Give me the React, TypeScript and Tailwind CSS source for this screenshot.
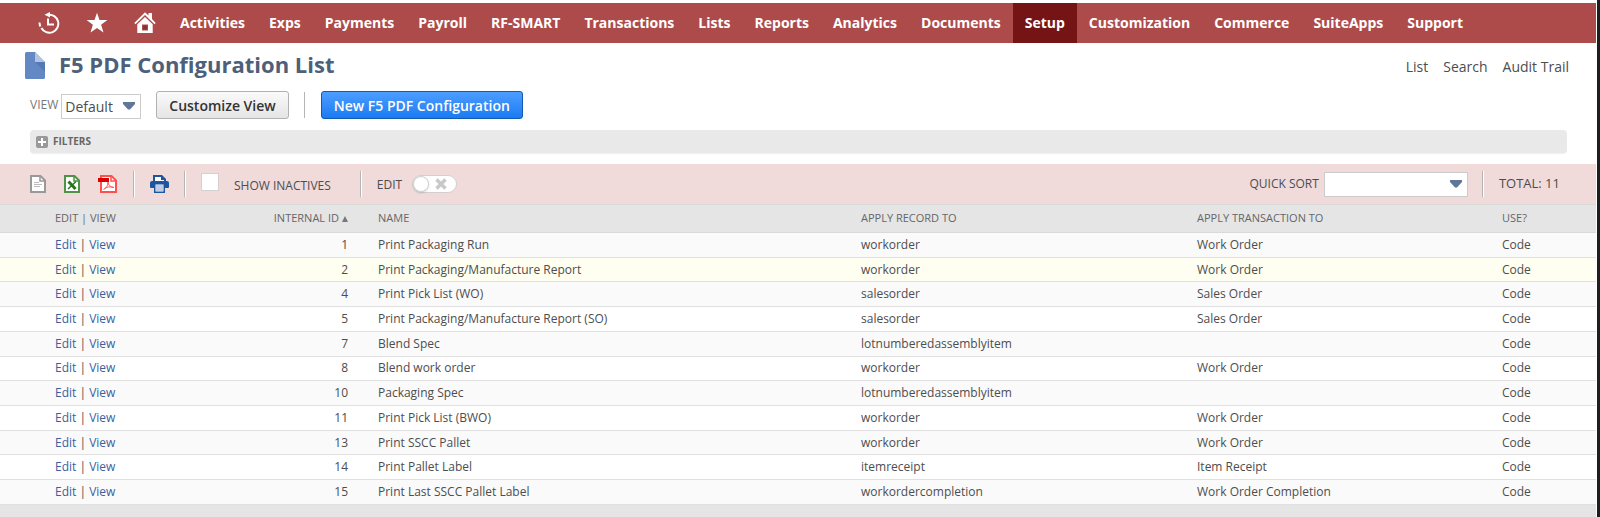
import clsx from "clsx";

const menu = [
  "Activities",
  "Exps",
  "Payments",
  "Payroll",
  "RF-SMART",
  "Transactions",
  "Lists",
  "Reports",
  "Analytics",
  "Documents",
  "Setup",
  "Customization",
  "Commerce",
  "SuiteApps",
  "Support",
];

const rows = [
  { id: 1, name: "Print Packaging Run", record: "workorder", transaction: "Work Order" },
  { id: 2, name: "Print Packaging/Manufacture Report", record: "workorder", transaction: "Work Order" },
  { id: 4, name: "Print Pick List (WO)", record: "salesorder", transaction: "Sales Order" },
  { id: 5, name: "Print Packaging/Manufacture Report (SO)", record: "salesorder", transaction: "Sales Order" },
  { id: 7, name: "Blend Spec", record: "lotnumberedassemblyitem", transaction: "" },
  { id: 8, name: "Blend work order", record: "workorder", transaction: "Work Order" },
  { id: 10, name: "Packaging Spec", record: "lotnumberedassemblyitem", transaction: "" },
  { id: 11, name: "Print Pick List (BWO)", record: "workorder", transaction: "Work Order" },
  { id: 13, name: "Print SSCC Pallet", record: "workorder", transaction: "Work Order" },
  { id: 14, name: "Print Pallet Label", record: "itemreceipt", transaction: "Item Receipt" },
  { id: 15, name: "Print Last SSCC Pallet Label", record: "workordercompletion", transaction: "Work Order Completion" },
];

const HOVERED_ID = 2;

function HistoryIcon() {
  return (
    <svg width="22" height="22" viewBox="0 0 22 22" fill="none" stroke="#fff">
      <path d="M1.500 10.500a9 9 0 0 0 .9 4M3.400 16a9 9 0 1 0 6.600-13.200h2" strokeWidth="2" />
      <path d="M12 0v5.500L6.500 2.800z" fill="#fff" stroke="none" />
      <path d="M10 6.500v6h6" strokeWidth="2" />
    </svg>
  );
}

function StarIcon() {
  return (
    <svg width="22" height="22" viewBox="0 0 22 22" fill="#fff">
      <path d="M11 .8l2.5 7.3h7.9l-6.3 4.7 2.4 7.7L11 16l-6.5 4.5 2.4-7.7L.6 8.1h7.9z" />
    </svg>
  );
}

function HomeIcon() {
  return (
    <svg width="22" height="22" viewBox="0 0 22 22" fill="#fff">
      <path d="M.3 11L11 .3l3.500 3.300V1H18v6l3.700 4-1.200 1.200L11 2.900l-9.500 9.300z" />
      <path d="M11 5l7.700 7.200V21H3.300v-8.800zM8 12.500v6h6v-6z" fillRule="evenodd" />
      <path d="M9 13.500h4v4H9z" fill="#8c2f2f" />
    </svg>
  );
}

function RecordIcon() {
  return (
    <svg width="20" height="27" viewBox="0 0 20 27">
      <path d="M1.500 0H10l10 10v15.500a1.500 1.500 0 0 1-1.500 1.500h-17A1.500 1.500 0 0 1 0 25.500V1.500A1.500 1.500 0 0 1 1.500 0z" fill="#6488c4" />
      <path d="M10 10h10v10z" fill="#5579b5" />
      <path d="M10 0l10 10H10z" fill="#b3c4e1" />
    </svg>
  );
}

function CsvIcon() {
  return (
    <svg width="16" height="18" viewBox="0 0 16 18" fill="none" stroke="#999">
      <path d="M1 1h9.500L15 5.500V17H1z" fill="#fff" strokeWidth="2" />
      <path d="M10 1v5h5" strokeWidth="1.500" />
      <path d="M4 7.500h5M4 9.500h8M4 11.500h6" stroke="#bbb" />
    </svg>
  );
}

function ExcelIcon() {
  return (
    <svg width="16" height="18" viewBox="0 0 16 18" fill="none" stroke="#4f9347">
      <path d="M1 1h9.500L15 5.500V17H1z" fill="#fff" strokeWidth="2" />
      <path d="M10 1v5h5" strokeWidth="1.500" />
      <path d="M4.500 6.500l7 7.500" stroke="#26761c" strokeWidth="3" />
      <path d="M12 6.500L4 14" stroke="#26761c" strokeWidth="1.500" />
    </svg>
  );
}

function PdfIcon() {
  return (
    <svg width="19" height="18" viewBox="0 0 19 18" fill="none" stroke="#ff5050">
      <path d="M3 1h10.500L18 5.500V17H3z" fill="#fff" strokeWidth="2" />
      <path d="M13 1v5h5" strokeWidth="1.500" />
      <path d="M5.500 14.500c3-1 4.500-4.500 4.500-7.500M10 7c0 3 2.500 5 6 5.500M6.500 13.500c2-1.500 6-2.200 9-1.200" strokeWidth="1" />
      <path d="M0 3h11v4H0z" fill="#d90000" stroke="none" />
    </svg>
  );
}

function PrintIcon() {
  return (
    <svg width="19" height="18" viewBox="0 0 19 18">
      <path d="M3 0h9l4 4v3H3z" fill="#1f549e" />
      <path d="M5 2h6v3h3v2H5z" fill="#fff" />
      <path d="M2 6h15a2 2 0 0 1 2 2v4a1 1 0 0 1-1 1H1a1 1 0 0 1-1-1V8a2 2 0 0 1 2-2z" fill="#1f549e" />
      <path d="M4 8.500h11V18H4z" fill="#1f549e" />
      <path d="M5.500 9.500h8v7h-8z" fill="#fff" />
      <path d="M6 11h7M6 13h7M6 15h7" stroke="#7f9cc9" />
    </svg>
  );
}

function Arrow() {
  return (
    <svg width="12" height="8" viewBox="0 0 12 8" className="pointer-events-none absolute right-1.5 top-2" fill="#607799">
      <path d="M0 0h12v2L7 7.500H5L0 2z" />
    </svg>
  );
}

function Divider() {
  return <div className="h-[26px] w-0.5 border-l border-r border-l-[#b5b5b5] border-r-white" />;
}

export default function App() {
  return (
    <div className="bg-[#1e1e1e] pr-[3px] font-['Open_Sans',sans-serif] text-[#4d4d4d]">
      <div className="bg-white pt-[3px] pr-px">
        <nav className="flex h-10 items-stretch bg-[#ad4b4b] pl-[38px] text-[14px] font-bold text-white">
          <div className="mr-6 flex items-center gap-[26px]">
            <button aria-label="Recent records"><HistoryIcon /></button>
            <button aria-label="Shortcuts"><StarIcon /></button>
            <button aria-label="Home"><HomeIcon /></button>
          </div>
          <div className="-ml-3 flex">
            {menu.map((item) => (
              <a key={item} href="#" className={clsx("flex items-center px-3 pb-0.5", item === "Setup" && "bg-[#741414]")}>
                {item}
              </a>
            ))}
          </div>
        </nav>

        <header className="flex items-center justify-between pt-[9px] pr-[27px] pl-[25px]">
          <div className="flex items-start gap-3.5">
            <RecordIcon />
            <h1 className="text-[22px] leading-6 font-bold text-[#4d5f79]">F5 PDF Configuration List</h1>
          </div>
          <div className="flex gap-[15px] pt-0.5 text-[14px]">
            <a href="#">List</a>
            <a href="#">Search</a>
            <a href="#">Audit Trail</a>
          </div>
        </header>

        <div className="flex items-center pt-3 pl-[30px]">
          <label htmlFor="view" className="mr-[3px] text-[12px] text-[#777]">VIEW</label>
          <div className="relative mt-0.5">
            <select id="view" className="h-[25px] w-20 appearance-none border border-[#ccc] bg-white pl-[3px] text-[14px] text-[#4d4d4d]">
              <option>Default</option>
            </select>
            <Arrow />
          </div>
          <button className="ml-[15px] h-7 rounded-[3px] border border-[#b2b2b2] bg-linear-to-b from-[#fafafa] to-[#e5e5e5] px-3 text-[14px] font-semibold text-[#333]">
            Customize View
          </button>
          <div className="mx-[15px]"><Divider /></div>
          <button className="h-7 rounded-[3px] border border-[#125ab2] bg-linear-to-b from-[#4c9dff] to-[#187bf2] px-3 text-[14px] font-semibold text-white">
            New F5 PDF Configuration
          </button>
        </div>

        <button className="mt-[11px] ml-[30px] flex h-6 w-[calc(100%-59px)] items-center gap-[5px] rounded-[4px] border-b border-[#f0f0f0] bg-[#e9e9e9] pl-1.5 text-[10px] font-bold text-[#666]">
          <svg width="12" height="12" viewBox="0 0 12 12">
            <rect width="12" height="12" rx="2" fill="#999" />
            <path d="M6 2v8M2 6h8" stroke="#fff" strokeWidth="2" />
          </svg>
          FILTERS
        </button>

        <div className="mt-[10px] flex h-10 items-center justify-between bg-[#f0dada] pr-9 pl-[30px] text-[12px]">
          <div className="flex items-center">
            <div className="flex items-center gap-[18px]">
              <button aria-label="Export CSV"><CsvIcon /></button>
              <button aria-label="Export Excel"><ExcelIcon /></button>
              <button aria-label="Export PDF"><PdfIcon /></button>
            </div>
            <div className="mr-[15px] ml-4"><Divider /></div>
            <button aria-label="Print"><PrintIcon /></button>
            <div className="mx-[15px]"><Divider /></div>
            <input id="inactives" type="checkbox" className="mb-1 size-[18px] appearance-none border border-[#d5d0d0] bg-white" />
            <label htmlFor="inactives" className="mt-1 ml-[15px]">SHOW INACTIVES</label>
            <div className="mr-[15px] ml-[29px]"><Divider /></div>
            <label htmlFor="edit" className="mt-0.5">EDIT</label>
            <button id="edit" role="switch" aria-checked="false" className="ml-[10px] flex h-[18px] w-[45px] items-center rounded-full border border-[#d5d0d0] bg-white">
              <span className="size-4 rounded-full border border-[#d0d0d0] bg-white shadow-sm" />
              <svg width="12" height="12" viewBox="0 0 12 12" className="ml-1.5" stroke="#c8c8c8" strokeWidth="3.500">
                <path d="M1.500 1.500l9 9M10.500 1.500l-9 9" />
              </svg>
            </button>
          </div>
          <div className="flex items-center">
            <label htmlFor="sort" className="mr-[5px]">QUICK SORT</label>
            <div className="relative">
              <select id="sort" className="block h-[25px] w-36 appearance-none border border-[#ccc] bg-white">
                <option></option>
              </select>
              <Arrow />
            </div>
            <div className="mr-[15px] ml-3.5"><Divider /></div>
            <span className="text-[13px]">TOTAL: 11</span>
          </div>
        </div>

        <table className="h-[301px] w-full table-fixed text-left text-[12px]">
          <colgroup>
            <col className="w-[200px]" />
            <col className="w-[170px]" />
            <col className="w-[483px]" />
            <col className="w-[336px]" />
            <col className="w-[305px]" />
            <col />
          </colgroup>
          <thead>
            <tr className="h-7 border-t border-b border-[#d9d9d9] bg-[#e5e5e5] text-[11px] text-[#666]">
              <th className="pl-[55px] font-normal">EDIT | VIEW</th>
              <th className="pr-[22px] text-right font-normal">
                INTERNAL ID
                <svg width="6" height="6" viewBox="0 0 6 6" className="ml-[3px] inline" fill="#777">
                  <path d="M3 0l3 6H0z" />
                </svg>
              </th>
              <th className="pl-2 font-normal">NAME</th>
              <th className="pl-2 font-normal">APPLY RECORD TO</th>
              <th className="pl-2 font-normal">APPLY TRANSACTION TO</th>
              <th className="pl-2 font-normal">USE?</th>
            </tr>
          </thead>
          <tbody>
            {rows.map((row) => (
              <tr
                key={row.id}
                className={clsx("border-b border-[#e0e0e0]", row.id === HOVERED_ID ? "bg-[#fefff0]" : "odd:bg-[#fafafa]")}
              >
                <td className="pl-[55px]">
                  <a href="#" className="text-[#3a5f9f]">Edit</a> | <a href="#" className="text-[#3a5f9f]">View</a>
                </td>
                <td className="pr-[22px] text-right">{row.id}</td>
                <td className="pl-2">{row.name}</td>
                <td className="pl-2">{row.record}</td>
                <td className="pl-2">{row.transaction}</td>
                <td className="pl-2">Code</td>
              </tr>
            ))}
          </tbody>
        </table>
        <div className="h-3 bg-[#e5e5e5]" />
      </div>
    </div>
  );
}
